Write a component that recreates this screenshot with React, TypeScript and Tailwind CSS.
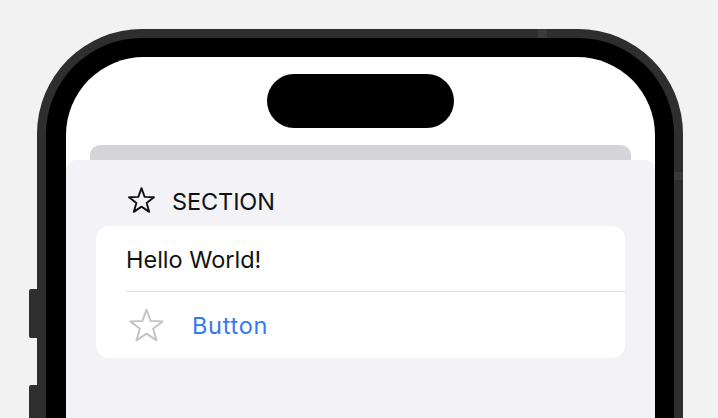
import React from "react";

const Star = ({ size, h, color, sw }: { size: number; h: number; color: string; sw: number }) => (
  <svg width={size} height={h} viewBox="1.2 1.3 21.6 20.6" fill="none" className="shrink-0">
    <polygon
      points="12,2.1 14.53,9.12 21.99,9.36 16.09,13.93 18.17,21.1 12,16.9 5.83,21.1 7.91,13.93 2.01,9.36 9.47,9.12"
      stroke={color}
      strokeWidth={sw}
      strokeLinejoin="round"
    />
  </svg>
);

export default function App() {
  return (
    <div
      className="w-[718px] h-[418px] bg-[#f2f2f2] overflow-hidden pt-[29px]"
      style={{ fontFamily: "Inter, 'Liberation Sans', sans-serif" }}
    >
      <div className="relative ml-[37px] w-[646px]">
        {/* side buttons */}
        <div className="absolute left-[-8px] top-[260px] w-[9px] h-[49px] bg-[#2e2e2e] rounded-l-[2px]" />
        <div className="absolute left-[-8px] top-[356px] w-[9px] h-[60px] bg-[#2e2e2e] rounded-l-[2px]" />
        {/* antenna bands */}
        <div className="absolute left-[501px] top-0 w-[9px] h-[9px] bg-[#3a3a3a] z-10" />
        <div className="absolute right-0 top-[143px] w-[9px] h-[8px] bg-[#3a3a3a] z-10" />
        <div className="bg-[#2e2e2e] rounded-t-[105px] pt-[9px] px-[9px]">
          <div className="bg-black rounded-t-[96px] pt-[19px] pl-[20px] pr-[19px]">
            <div className="bg-white rounded-t-[78px] h-[380px] overflow-hidden flex flex-col">
              <div className="mt-[17px] h-[54px] w-[187px] rounded-full bg-black self-center shrink-0" />
              <div className="mt-[17px] mx-[24px] h-[15px] bg-[#d5d4d9] rounded-t-[10px] shrink-0" />
              <div className="flex-1 bg-[#f2f2f7] rounded-t-[10px] flex flex-col">
                <div className="flex items-center h-[26px] mt-[27px] mb-[13px] pl-[62px] gap-[17px]">
                  <Star size={27} h={26} color="#111" sw={1.5} />
                  <span className="text-[23.5px] text-[#111] leading-none pt-[3px] tracking-[-0.1px]">SECTION</span>
                </div>
                <div className="mx-[30px] bg-white rounded-[13px] flex flex-col">
                  <div className="h-[65px] flex items-center pl-[30px]">
                    <span className="text-[23.5px] text-[#111] leading-none pt-[2px]">Hello World!</span>
                  </div>
                  <div className="ml-[30px] h-px bg-[#e0e0e2]" />
                  <div className="h-[66px] flex items-center pl-[33px] gap-[28px]">
                    <Star size={35} h={34} color="#c4c4c6" sw={1.2} />
                    <span className="text-[23.5px] text-[#3478f6] leading-none tracking-[0.7px] pt-[2px]">Button</span>
                  </div>
                </div>
              </div>
            </div>
          </div>
        </div>
      </div>
    </div>
  );
}
